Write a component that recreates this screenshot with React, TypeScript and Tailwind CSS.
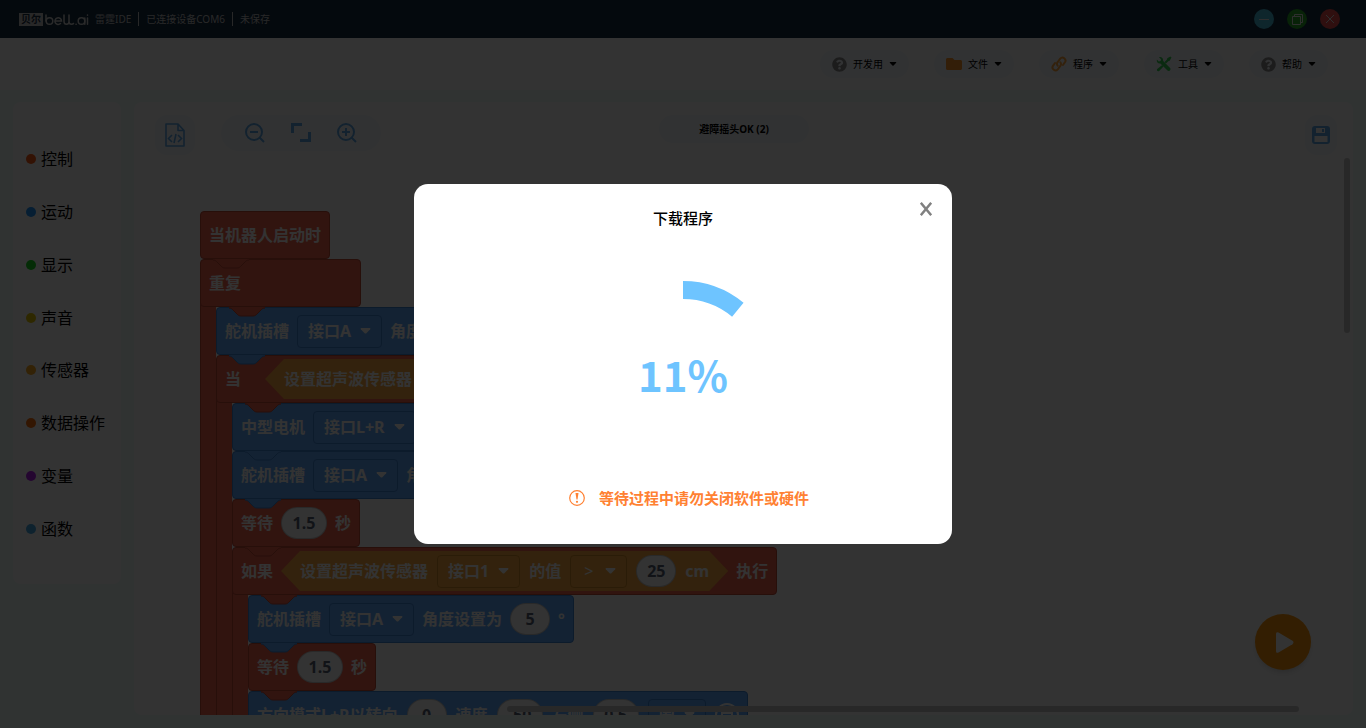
import type { ReactNode } from "react";
import clsx from "clsx";
import { FaFolder, FaQuestionCircle } from "react-icons/fa";

type Tone = "red" | "blue";

const FILL: Record<Tone, string> = { red: "#f5644b", blue: "#5faaff" };
const EDGE: Record<Tone, string> = { red: "#c04a36", blue: "#3f86d6" };

const CATEGORIES = [
  { name: "控制", dot: "bg-[#ff5a14]" },
  { name: "运动", dot: "bg-[#1e96ff]" },
  { name: "显示", dot: "bg-[#14dc1e]" },
  { name: "声音", dot: "bg-[#e6c800]" },
  { name: "传感器", dot: "bg-[#ffaa1e]" },
  { name: "数据操作", dot: "bg-[#ff6e0a]" },
  { name: "变量", dot: "bg-[#b41ef0]" },
  { name: "函数", dot: "bg-[#46aae6]" },
];

function LinkIcon() {
  return (
    <svg viewBox="0 0 16 16" className="size-4" fill="none" stroke="#ffa53c" strokeWidth="2" strokeLinecap="round">
      <path d="M6.6 9.6 A3 3 0 0 1 6.9 5.8 L9.2 2.6 A2.9 2.9 0 0 1 13.6 6.7 L12 9" />
      <path d="M9.4 6.4 A3 3 0 0 1 9.1 10.2 L6.8 13.4 A2.9 2.9 0 0 1 2.4 9.3 L4 7" />
    </svg>
  );
}

function ToolsIcon() {
  return (
    <svg viewBox="0 0 16 16" className="size-4" fill="#32d250">
      <path d="M3 1.2 5 3.2 4.6 5 2.8 5.4 .9 3.5 C.3 5.4 1.6 7.8 4.4 7.5 L11.5 14.6 C13 16 15.600 13.700 14.100 12 L7.200 5 C7.600 2.200 5 .4 3 1.200Z" />
      <path d="M15.500 1.600 14.300 .5 11.300 2.300 10.800 3.700 8.500 6 10 7.500 12.300 5.200 13.700 4.700Z" />
      <path d="M6.200 9 1.200 13 C.2 14.400 1.700 16 3.200 15 L7.500 10.400Z" />
    </svg>
  );
}

const MENUS = [
  { name: "开发用", icon: <FaQuestionCircle className="size-[15px] text-[#8c8c8c]" /> },
  { name: "文件", icon: <FaFolder className="size-4 text-[#ff9628]" /> },
  { name: "程序", icon: <LinkIcon /> },
  { name: "工具", icon: <ToolsIcon /> },
  { name: "帮助", icon: <FaQuestionCircle className="size-[15px] text-[#8c8c8c]" /> },
];

function Caret({ className }: { className?: string }) {
  return (
    <svg viewBox="0 0 12 7" className={clsx("shrink-0", className)} fill="currentColor">
      <path d="M1 0 H11 Q12.400 .3 11.500 1.400 L7 6 Q6 7 5 6 L.5 1.400 Q-.4 .3 1 0Z" />
    </svg>
  );
}

function Notch({ tone }: { tone: Tone }) {
  return (
    <svg viewBox="0 0 36 10" className="absolute left-3 -top-px z-10 h-[10px] w-9">
      <path
        d="M0 0 V1 C2 1 3 2 4 3 L8 7 C9 8 10 9 12 9 H24 C26 9 27 8 28 7 L32 3 C33 2 34 1 36 1 V0Z"
        fill={FILL[tone]}
      />
      <path
        d="M0 1 C2 1 3 2 4 3 L8 7 C9 8 10 9 12 9 H24 C26 9 27 8 28 7 L32 3 C33 2 34 1 36 1"
        fill="none"
        stroke={EDGE[tone]}
      />
    </svg>
  );
}

// `above` is the tone of the block this one plugs into, which owns the tab.
function Block({ tone, above, className, children }: { tone: Tone; above?: Tone; className?: string; children: ReactNode }) {
  return (
    <div
      className={clsx(
        "relative flex h-12 w-max items-center gap-2 rounded-[4px] border px-2 text-base font-bold text-white",
        tone === "red" ? "border-[#c04a36] bg-[#f5644b]" : "border-[#3f86d6] bg-[#5faaff]",
        className,
      )}
    >
      {above && <Notch tone={above} />}
      {children}
    </div>
  );
}

function Nest({ children }: { children: ReactNode }) {
  return (
    <div className="flex">
      <div className="-mt-1 w-4 shrink-0 border-l border-[#c04a36] bg-[#f5644b]" />
      <div>{children}</div>
    </div>
  );
}

function Field({ children, tone = "blue" }: { children: ReactNode; tone?: "blue" | "amber" }) {
  return (
    <button
      type="button"
      className={clsx(
        "flex h-[33px] items-center gap-[9px] rounded-[4px] border px-[10px] font-bold whitespace-nowrap",
        tone === "blue" ? "border-[#3f86d6]" : "border-[#d28a28]",
      )}
    >
      {children}
      <Caret className="h-[6px] w-[11px]" />
    </button>
  );
}

function Value({ value, label, wide }: { value: string; label: string; wide?: boolean }) {
  return (
    <input
      type="text"
      aria-label={label}
      defaultValue={value}
      className={clsx(
        "h-8 rounded-full border border-black/20 bg-white text-center text-base font-bold text-[#575e75]",
        wide ? "w-[46px]" : "w-10",
      )}
    />
  );
}

function Hexagon({ children }: { children: ReactNode }) {
  return (
    <div className="flex h-10 items-center gap-[9px] bg-[#ffaa41] px-[19px] [clip-path:polygon(0_50%,19px_0,calc(100%-19px)_0,100%_50%,calc(100%-19px)_100%,19px_100%)]">
      {children}
    </div>
  );
}

function ServoBlock({ above }: { above: Tone }) {
  return (
    <Block tone="blue" above={above}>
      <span>舵机插槽</span>
      <Field>接口A</Field>
      <span>角度设置为</span>
      <Value value="5" label="角度" />
      <span>°</span>
    </Block>
  );
}

function WaitBlock() {
  return (
    <Block tone="red" above="blue">
      <span>等待</span>
      <Value value="1.5" label="等待秒数" wide />
      <span>秒</span>
    </Block>
  );
}

function DistanceCheck() {
  return (
    <Hexagon>
      <span>设置超声波传感器</span>
      <Field tone="amber">接口1</Field>
      <span>的值</span>
      <Field tone="amber">
        <span className="px-[3px] font-normal">&gt;</span>
      </Field>
      <Value value="25" label="距离" />
      <span>cm</span>
    </Hexagon>
  );
}

function Program() {
  return (
    <div className="w-max">
      <Block tone="red">当机器人启动时</Block>
      <Block tone="red" above="red" className="min-w-[161px]">
        重复
      </Block>
      <Nest>
        <ServoBlock above="red" />
        <Block tone="red" above="blue">
          <span className="mr-4">当</span>
          <DistanceCheck />
        </Block>
        <Nest>
          <Block tone="blue" above="red">
            <span>中型电机</span>
            <Field>接口L+R</Field>
            <span>速度</span>
            <Value value="50" label="电机速度" />
          </Block>
          <ServoBlock above="blue" />
          <WaitBlock />
          <Block tone="red" above="red">
            <span>如果</span>
            <DistanceCheck />
            <span>执行</span>
          </Block>
          <Nest>
            <ServoBlock above="red" />
            <WaitBlock />
            <Block tone="blue" above="red" className="gap-[9px]">
              <span>方向模式L+R以转向</span>
              <Value value="0" label="转向" />
              <span>速度</span>
              <Value value="-50" label="速度" wide />
              <span>左侧</span>
              <Value value="0.5" label="圈数" wide />
              <Field>圈</Field>
              <svg viewBox="0 0 24 24" className="size-6" fill="none" stroke="white" strokeWidth="2">
                <circle cx="12" cy="12" r="11" />
                <path d="M7 10 H17 V16 H7Z" />
              </svg>
            </Block>
          </Nest>
        </Nest>
      </Nest>
    </div>
  );
}

function Logo() {
  return (
    <div className="flex items-center gap-[2px] text-[#d2d2d2]">
      <span className="bg-[#c8c8c8] px-[2px] text-[10px] leading-[13px] font-bold text-[#142d41]">贝尔</span>
      <svg viewBox="0 0 44 13" className="h-[13px] w-11" fill="none" stroke="currentColor" strokeWidth="1.500" strokeLinecap="round">
        <path d="M1 2 V8" />
        <circle cx="4.500" cy="8" r="3.300" />
        <path d="M10 8 H16.500 A3.300 3.300 0 1 0 15.500 10.500" />
        <path d="M19 2 V8.500 Q19 11.300 21.500 11.300 Q24 11.300 24 8.500 V2 M24 8.500 Q24 11.300 26.500 11.300 Q28 11.300 28.500 10.500" />
        <path d="M31 11.200 H31.200" />
        <circle cx="36.500" cy="8" r="3.300" />
        <path d="M39.800 5 V11.300 M42.500 5 V11.300 M42.500 2 V2.200" />
      </svg>
    </div>
  );
}

function TitleBar() {
  return (
    <header className="flex h-[38px] items-center bg-[#142d41] pr-[26px] pl-[19px] text-[10px] text-[#c8c8c8]">
      <Logo />
      <span className="ml-[6px] border-r border-[#c8c8c8] pr-[7px] leading-[14px]">雷霆IDE</span>
      <span className="border-r border-[#c8c8c8] px-[7px] leading-[14px]">已连接设备COM6</span>
      <span className="pl-[7px]">未保存</span>
      <div className="ml-auto flex gap-[13px]">
        <button type="button" aria-label="最小化" className="grid size-5 place-items-center rounded-full bg-[#46bedc]">
          <svg viewBox="0 0 10 10" className="size-[10px]" stroke="#e6e6e6">
            <path d="M0 5.500 H10" />
          </svg>
        </button>
        <button type="button" aria-label="最大化" className="grid size-5 place-items-center rounded-full bg-[#28aa28]">
          <svg viewBox="0 0 11 11" className="size-[11px]" fill="none" stroke="#e6e6e6">
            <path d="M.5 2.500 H8.500 V10.500 H.5Z M2.500 2.500 V.5 H10.500 V8.500 H8.500" />
          </svg>
        </button>
        <button type="button" aria-label="关闭" className="grid size-5 place-items-center rounded-full bg-[#eb4b4b]">
          <svg viewBox="0 0 8 8" className="size-2" stroke="#e6e6e6">
            <path d="M0 0 L8 8 M8 0 L0 8" />
          </svg>
        </button>
      </div>
    </header>
  );
}

function MenuBar() {
  return (
    <nav className="flex h-[52px] items-center justify-end gap-[25px] bg-white pr-[38px]">
      {MENUS.map((menu) => (
        <button
          key={menu.name}
          type="button"
          className="flex h-7 items-center gap-[6px] rounded-full bg-[#f5faff] px-3 text-[10px] text-black"
        >
          {menu.icon}
          {menu.name}
          <Caret className="h-1 w-2" />
        </button>
      ))}
    </nav>
  );
}

function Sidebar() {
  return (
    <aside className="flex h-[482px] w-[108px] shrink-0 flex-col rounded-lg bg-white pt-[31px] pb-[29px]">
      {CATEGORIES.map((c) => (
        <a key={c.name} href={`#${c.name}`} className="flex flex-1 items-center gap-[5px] pl-[13px] text-base text-black">
          <span className={clsx("size-[10px] rounded-full", c.dot)} />
          {c.name}
        </a>
      ))}
    </aside>
  );
}

function CanvasTools() {
  return (
    <div className="flex items-start justify-between pt-[13px] pr-4 pl-[21px] text-[#5faaeb]">
      <div className="flex flex-1 gap-[26px]">
        <button type="button" aria-label="查看代码" className="grid h-10 w-10 place-items-center rounded-xl bg-[#f5faff]">
          <svg viewBox="0 0 20 24" className="h-6 w-5" fill="none" stroke="currentColor" strokeWidth="1.600">
            <path d="M1 1 H13 L19 7.500 V23 H1Z M13 1 V7.500 H19" strokeLinejoin="round" />
            <path d="M7 12 L3.500 15.500 L7 19 M13 12 L16.500 15.500 L13 19 M11 11 L9 20" />
          </svg>
        </button>
        <div className="flex h-9 items-center gap-[26px] rounded-full bg-[#f5faff] px-6">
          <button type="button" aria-label="缩小">
            <svg viewBox="0 0 20 20" className="size-5" fill="none" stroke="currentColor" strokeWidth="2">
              <circle cx="9" cy="9" r="8" />
              <path d="M5 9 H13 M14.500 14.500 L19 19" />
            </svg>
          </button>
          <button type="button" aria-label="适应屏幕">
            <svg viewBox="0 0 20 20" className="size-5" fill="none" stroke="currentColor" strokeWidth="3">
              <path d="M1.500 10 V1.500 H11 M18.500 9 V17.500 H9" />
            </svg>
          </button>
          <button type="button" aria-label="放大">
            <svg viewBox="0 0 20 20" className="size-5" fill="none" stroke="currentColor" strokeWidth="2">
              <circle cx="9" cy="9" r="8" />
              <path d="M5 9 H13 M9 5 V13 M14.500 14.500 L19 19" />
            </svg>
          </button>
        </div>
      </div>
      <h1 className="mr-6 h-7 rounded-full bg-[#f5faff] px-10 text-[10px] leading-7 font-bold text-black">避障摇头OK (2)</h1>
      <div className="flex flex-1 justify-end">
        <button type="button" aria-label="保存" className="grid h-10 w-8 place-items-center rounded-xl bg-[#f5faff]">
          <svg viewBox="0 0 18 18" className="size-[18px]">
            <rect width="18" height="18" rx="3" fill="currentColor" />
            <path d="M4 2 H13 V7 H4Z M2.500 10 H15.500 V16 H2.500Z" fill="white" />
            <path d="M10 3 H12 V6 H10Z" fill="currentColor" />
          </svg>
        </button>
      </div>
    </div>
  );
}

function DownloadDialog({ percent }: { percent: number }) {
  const angle = (percent / 100) * 2 * Math.PI;
  const point = (r: number) => `${95 + r * Math.sin(angle)} ${95 - r * Math.cos(angle)}`;

  return (
    <div className="fixed inset-0 z-20 flex items-center justify-center bg-black/80">
      <div
        role="dialog"
        aria-modal="true"
        aria-labelledby="download-title"
        className="relative flex w-[538px] flex-col items-center rounded-[14px] bg-white pt-[23px] pb-[34px]"
      >
        <h2 id="download-title" className="text-[15px] leading-[22px] font-medium text-black">
          下载程序
        </h2>
        <button type="button" aria-label="关闭" className="absolute top-[18px] right-5">
          <svg viewBox="0 0 12 14" className="h-[14px] w-3" fill="none" stroke="#808080" strokeWidth="2.500">
            <path d="M.8 .8 L11.200 13.200 M11.200 .8 L.8 13.200" />
          </svg>
        </button>

        <div className="mt-[52px] grid size-[190px] place-items-center">
          <svg viewBox="0 0 190 190" className="col-start-1 row-start-1 size-[190px]" fill="#6ec4ff">
            <path d={`M95 0 A95 95 0 0 1 ${point(95)} L${point(77)} A77 77 0 0 0 95 18Z`} />
          </svg>
          <span className="col-start-1 row-start-1 pb-1 font-['Noto_Sans_CJK_SC',sans-serif] text-[42px] leading-none font-bold text-[#6ec4ff]">
            {percent}%
          </span>
        </div>

        <p className="mt-[15px] flex items-center gap-[14px] pl-3 text-[15px] leading-6 font-bold text-[#ff8132]">
          <svg viewBox="0 0 16 16" className="size-4" fill="none" stroke="currentColor">
            <circle cx="8" cy="8" r="7.300" strokeWidth="1.200" />
            <path d="M6.500 3 H9.500 L8.500 9.500 H7.500Z" fill="currentColor" stroke="none" />
            <circle cx="8" cy="11.800" r="1.100" fill="currentColor" stroke="none" />
          </svg>
          等待过程中请勿关闭软件或硬件
        </p>
      </div>
    </div>
  );
}

export default function App() {
  return (
    <div className="flex h-screen flex-col overflow-hidden bg-[#f0fffa] font-['Noto_Sans','Noto_Sans_CJK_SC',sans-serif]">
      <TitleBar />
      <MenuBar />
      <div className="flex min-h-0 flex-1 gap-[13px] px-[13px] pt-3 pb-[13px]">
        <Sidebar />
        <main className="relative min-w-0 flex-1 overflow-hidden rounded-lg bg-white">
          <CanvasTools />
          <div className="mt-[56px] pl-[66px]">
            <Program />
          </div>
          <div className="absolute top-[56px] right-[3px] h-[175px] w-[6px] rounded-full bg-[#c8c8c8]" />
          <div className="absolute right-[54px] bottom-[3px] z-10 h-[6px] w-[65%] rounded-full bg-[#c8c8c8]" />
          <button
            type="button"
            aria-label="运行"
            className="absolute right-[42px] bottom-[45px] grid size-14 place-items-center rounded-full bg-[#ff960a] shadow-md"
          >
            <svg viewBox="0 0 18 21" className="ml-1 h-[21px] w-[18px]" fill="white">
              <path d="M0 2 Q0 -.8 2.500 .6 L16.500 8.800 Q18.500 10.500 16.500 12.200 L2.500 20.400 Q0 21.800 0 19Z" />
            </svg>
          </button>
        </main>
      </div>
      <DownloadDialog percent={11} />
    </div>
  );
}
